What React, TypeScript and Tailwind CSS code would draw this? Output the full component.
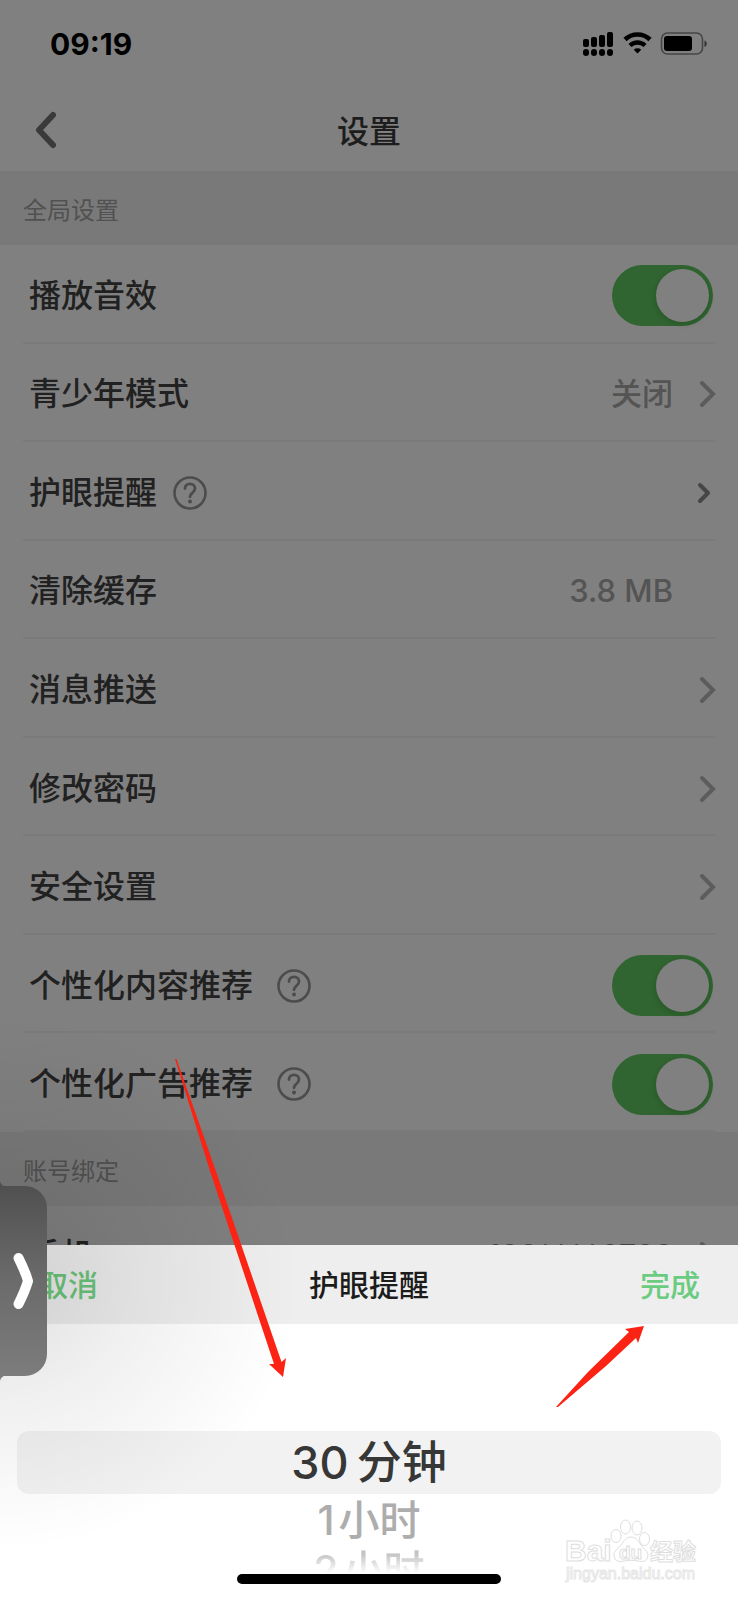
import { useState } from "react";

const dividerRow =
  "flex items-center justify-between pt-[5px] pl-[6px] border-b-2 border-[#7a7a7a]";

function Chevron({ small = false }: { small?: boolean }) {
  if (small) {
    return (
      <svg width="24" height="32" viewBox="0 0 24 32">
        <path
          d="M9 8l8 8-8 8"
          fill="none"
          stroke="#464646"
          strokeWidth="4"
          strokeLinecap="round"
          strokeLinejoin="round"
        />
      </svg>
    );
  }
  return (
    <svg width="24" height="32" viewBox="0 0 24 32" className="-mr-1">
      <path
        d="M7 5l11 11-11 11"
        fill="none"
        stroke="#5c5c5c"
        strokeWidth="4"
        strokeLinecap="round"
        strokeLinejoin="miter"
      />
    </svg>
  );
}

function HelpIcon() {
  return (
    <svg width="34" height="34" viewBox="0 0 34 34">
      <circle cx="17" cy="17" r="15.5" fill="none" stroke="#4c4c4c" strokeWidth="2.6" />
      <path
        d="M12 12.500c0-3 2.200-4.700 5-4.700s5 1.900 5 4.600c0 2.200-1.200 3.200-2.600 4.400-1.500 1.200-2.400 2-2.400 4"
        fill="none"
        stroke="#4c4c4c"
        strokeWidth="2.8"
        strokeLinecap="round"
      />
      <circle cx="17" cy="25.500" r="2" fill="#4c4c4c" />
    </svg>
  );
}

function StatusIcons() {
  return (
    <svg width="126" height="28" viewBox="0 0 126 28">
      {/* dual sim signal */}
      <rect x="0" y="9" width="6" height="8" rx="2" />
      <rect x="8" y="7" width="6" height="10" rx="2" />
      <rect x="16" y="5" width="6" height="12" rx="2" />
      <rect x="24" y="2" width="6" height="15" rx="2" />
      <rect x="0" y="19" width="6" height="7" rx="3" />
      <rect x="8" y="19" width="6" height="7" rx="3" />
      <rect x="16" y="19" width="6" height="7" rx="3" />
      <rect x="24" y="19" width="6" height="7" rx="3" />
      {/* wifi */}
      <path d="M42 9.500a18 18 0 0 1 25 0" fill="none" stroke="#000" strokeWidth="4.600" />
      <path d="M47 15.500a11 11 0 0 1 15 0" fill="none" stroke="#000" strokeWidth="4.400" />
      <path d="M54.500 23.500l-3.700-3.700a5.500 5.500 0 0 1 7.400 0z" />
      {/* battery */}
      <rect x="78.500" y="3" width="41" height="21" rx="6" fill="none" stroke="#454545" strokeWidth="1.600" />
      <rect x="81" y="6" width="28" height="15" rx="3" />
      <path d="M121.500 10.500c3 1 3 5.500 0 6.500z" fill="#333" />
    </svg>
  );
}

function Toggle({ id }: { id: string }) {
  const [on, setOn] = useState(true);
  return (
    <input
      id={id}
      type="checkbox"
      role="switch"
      checked={on}
      onChange={() => setOn(!on)}
      className="appearance-none flex items-center w-[101px] h-[61px] mr-[2px] px-1 rounded-full bg-[#5e5e5e] checked:bg-[#306430] checked:justify-end before:block before:size-[53px] before:rounded-full before:bg-[#808080] before:shadow-[0_2px_6px_rgba(0,0,0,0.15)]"
    />
  );
}

function SectionTitle({ title }: { title: string }) {
  return (
    <h2 className="flex items-center h-[74px] pt-[5px] px-[23px] bg-[#797979] text-2xl text-[#515151]">
      {title}
    </h2>
  );
}

type Item = {
  label: string;
  help?: boolean;
  helpGap?: string;
  value?: string;
  kind: "toggle" | "link" | "small" | "none";
};

const items: Item[] = [
  { label: "播放音效", kind: "toggle" },
  { label: "青少年模式", value: "关闭", kind: "link" },
  { label: "护眼提醒", help: true, helpGap: "ml-4", kind: "small" },
  { label: "清除缓存", value: "3.8 MB", kind: "none" },
  { label: "消息推送", kind: "link" },
  { label: "修改密码", kind: "link" },
  { label: "安全设置", kind: "link" },
  { label: "个性化内容推荐", help: true, helpGap: "ml-6", kind: "toggle" },
  { label: "个性化广告推荐", help: true, helpGap: "ml-6", kind: "toggle" },
];

function SettingRow({ item, index }: { item: Item; index: number }) {
  const id = "setting-" + index;
  const help = item.help && (
    <button aria-label={item.label + "说明"} className={item.helpGap}>
      <HelpIcon />
    </button>
  );

  if (item.kind === "toggle") {
    return (
      <li className={dividerRow}>
        <div className="flex items-center">
          <label htmlFor={id}>{item.label}</label>
          {help}
        </div>
        <Toggle id={id} />
      </li>
    );
  }

  return (
    <li className={dividerRow}>
      <div className="flex items-center">
        <button>{item.label}</button>
        {help}
      </div>
      <div className="flex items-center gap-[22px] text-[31px] text-[#545454]">
        {item.value && <span>{item.value}</span>}
        {item.kind === "none" && <span className="w-5" />}
        {item.kind === "link" && <Chevron />}
        {item.kind === "small" && <Chevron small />}
      </div>
    </li>
  );
}

function Watermark() {
  return (
    <svg
      width="140"
      height="70"
      viewBox="0 0 140 70"
      className="absolute right-[36px] bottom-[12px]"
      fill="#fff"
      stroke="#dedede"
      strokeWidth="1"
    >
      <text x="3" y="43" fontSize="30" fontWeight="700" fontFamily="Liberation Sans, sans-serif">
        Bai
      </text>
      <ellipse cx="54" cy="18" rx="5" ry="6.500" />
      <ellipse cx="63.500" cy="9" rx="5" ry="7" />
      <ellipse cx="75" cy="10" rx="5" ry="7" />
      <ellipse cx="82.500" cy="21" rx="5" ry="6.500" />
      <path d="M69 19c-5 0-7 4-10 8s-8 6-7 11c1 6 6 6 10 5 5-1 9-1 14 0 4 1 9 1 10-5 0-5-4-7-7-11s-5-8-10-8z" />
      <text x="57" y="41" fontSize="19" fontWeight="700" fontFamily="Liberation Sans, sans-serif">
        du
      </text>
      <text x="88" y="42" fontSize="23" fontWeight="700" fontFamily="Noto Sans CJK SC, sans-serif">
        经验
      </text>
      <text x="4" y="61" fontSize="16" stroke="#e6e6e6" fontFamily="Liberation Sans, sans-serif">
        jingyan.baidu.com
      </text>
    </svg>
  );
}

function PickerSheet() {
  return (
    <section className="relative flex-1 flex flex-col bg-white">
      <div className="grid grid-cols-3 items-center h-[79px] pt-[2px] px-[38px] bg-[#eeeeee] text-[30px] font-medium">
        <button className="justify-self-start text-[#6bc57b]">取消</button>
        <h2 className="justify-self-center whitespace-nowrap text-[#1c1c1c]">护眼提醒</h2>
        <button className="justify-self-end text-[#6bcb80]">完成</button>
      </div>
      <div role="listbox" aria-label="护眼提醒" className="flex flex-col px-[17px] pt-[107px] font-medium">
        <button
          role="option"
          aria-selected="true"
          className="flex justify-center gap-2 h-[63px] rounded-xl bg-[#f2f2f2] text-[45px] leading-[63px] text-[#373737]"
        >
          <span>30</span>
          <span>分钟</span>
        </button>
        <button
          role="option"
          aria-selected="false"
          className="flex justify-center gap-1 h-[52px] text-[41px] leading-[52px] text-[#adadad]"
        >
          <span>1</span>
          <span>小时</span>
        </button>
        <button
          role="option"
          aria-selected="false"
          className="flex justify-center gap-1 h-[27px] overflow-hidden text-[41px] leading-[48px] text-[#c4c4c4] mask-b-from-30%"
        >
          <span>2</span>
          <span>小时</span>
        </button>
      </div>
      <div className="absolute bottom-4 left-1/2 -translate-x-1/2 w-[264px] h-[10px] rounded-full bg-black" />
      <Watermark />
    </section>
  );
}

function SideHandle() {
  return (
    <>
      <div className="absolute left-0 top-[1020px] w-[340px] h-[580px] pointer-events-none bg-[radial-gradient(ellipse_300px_270px_at_0%_45%,rgba(0,0,0,0.12),rgba(0,0,0,0.06)_45%,transparent)]" />
      <button
        aria-label="展开"
        className="absolute left-0 top-[1186px] w-[47px] h-[190px] rounded-r-[22px] bg-linear-to-b from-[#505050] via-[#6b6b6b] to-[#7c7c7c]"
      >
        <svg width="47" height="190" viewBox="0 0 47 190" className="overflow-visible">
          <path d="M0-5q1 5 6 5.500H0z" fill="#505050" />
          <path d="M0 195q1-5 6-5.500H0z" fill="#7c7c7c" />
          <path
            d="M18.500 72q7 14 9.500 23q-3 10-9.500 23"
            fill="none"
            stroke="#fff"
            strokeWidth="10"
            strokeLinecap="round"
            strokeLinejoin="round"
          />
        </svg>
      </button>
    </>
  );
}

function Arrows() {
  return (
    <svg
      width="738"
      height="1600"
      viewBox="0 0 738 1600"
      fill="#fb2314"
      className="absolute left-0 top-0 pointer-events-none"
    >
      <path d="M175 1059l1.500 0 39 111 66 192 4.500-4-3 19-14-13 5 0-64-193z" />
      <path d="M556 1407L588 1372L629 1332L625 1329L644 1326L638 1343L636 1338L606 1366L558 1407z" />
    </svg>
  );
}

export default function App() {
  return (
    <div className="relative flex flex-col min-h-screen overflow-hidden bg-[#808080] font-['Inter','Noto_Sans_CJK_SC',sans-serif]">
      <header>
        <div className="flex items-center justify-between h-[88px] pl-[50px] pr-[29px]">
          <span className="text-[30px] font-bold text-black">09:19</span>
          <StatusIcons />
        </div>
        <nav className="grid grid-cols-3 items-center h-[83px] px-[34px]">
          <button aria-label="返回" className="justify-self-start">
            <svg width="24" height="40" viewBox="0 0 24 40">
              <path
                d="M19 5L5 20l14 15"
                fill="none"
                stroke="#3a3a3a"
                strokeWidth="6"
                strokeLinecap="round"
                strokeLinejoin="round"
              />
            </svg>
          </button>
          <h1 className="justify-self-center pt-1 text-[32px] font-medium text-[#1d1d1d]">设置</h1>
        </nav>
      </header>

      <main>
        <SectionTitle title="全局设置" />
        <ul className="grid auto-rows-fr min-h-[887px] px-[23px] text-[32px] font-medium text-[#212121]">
          {items.map((item, i) => (
            <SettingRow key={item.label} item={item} index={i} />
          ))}
        </ul>
        <SectionTitle title="账号绑定" />
        {/* the first row here is mostly covered by the sheet */}
        <div className="h-[39px] overflow-hidden">
          <div className="flex items-center justify-between h-[98px] pl-[29px] pr-[23px] text-[32px] font-medium text-[#212121]">
            <span>手机</span>
            <div className="flex items-center gap-[22px] text-[30px] text-[#454545]">
              <span>138****6782</span>
              <Chevron />
            </div>
          </div>
        </div>
      </main>

      <PickerSheet />
      <SideHandle />
      <Arrows />
    </div>
  );
}
